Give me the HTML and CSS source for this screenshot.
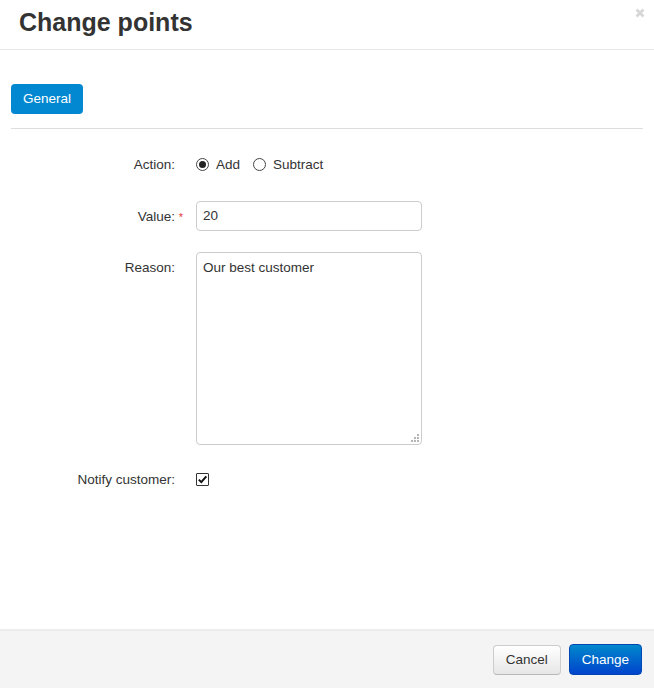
FILE: index.html
```html
<!DOCTYPE html>
<html>
<head>
<meta charset="utf-8">
<link rel="stylesheet" href="styles.css">
</head>
<body>
<div class="dialog">
  <div class="header">
    <h1 class="title">Change points</h1>
    <span class="close"><svg width="10" height="10" viewBox="0 0 10 10"><path d="M1.5 1.5L8.5 8.5M8.5 1.5L1.5 8.5" stroke="#d6d6d6" stroke-width="2.6" stroke-linecap="butt"/></svg></span>
  </div>
  <div class="body">
    <div class="tabs">
      <span class="tab">General</span>
    </div>
    <div class="form">
      <div class="row row-action">
        <div class="label">Action:</div>
        <div class="control radios">
          <span class="radio checked"></span><span class="opt">Add</span>
          <span class="radio"></span><span class="opt">Subtract</span>
        </div>
      </div>
      <div class="row row-value">
        <div class="label">Value:<span class="req">*</span></div>
        <div class="control"><div class="input">20</div></div>
      </div>
      <div class="row row-reason">
        <div class="label label-top">Reason:</div>
        <div class="control">
          <div class="textarea">Our best customer
            <svg class="grip" width="8" height="8" viewBox="0 0 8 8"><g fill="#b5b5b5"><rect x="6" y="0" width="2" height="2"/><rect x="3" y="3" width="2" height="2"/><rect x="6" y="3" width="2" height="2"/><rect x="0" y="6" width="2" height="2"/><rect x="3" y="6" width="2" height="2"/><rect x="6" y="6" width="2" height="2"/></g></svg>
          </div>
        </div>
      </div>
      <div class="row row-notify">
        <div class="label">Notify customer:</div>
        <div class="control"><span class="checkbox"><svg width="11" height="11" viewBox="0 0 11 11"><path d="M1.8 5.6L4.3 8.1L9.3 2.3" fill="none" stroke="#111" stroke-width="2"/></svg></span></div>
      </div>
    </div>
  </div>
  <div class="footer">
    <span class="btn btn-default">Cancel</span>
    <span class="btn btn-primary">Change</span>
  </div>
</div>
</body>
</html>
```
FILE: styles.css
```css
html, body {
  margin: 0;
  padding: 0;
  background: #fff;
}
body {
  font-family: "Liberation Sans", Arial, sans-serif;
  font-size: 13.5px;
  color: #333;
}
.dialog {
  height: 688px;
  display: flex;
  flex-direction: column;
}
.header {
  height: 49px;
  border-bottom: 1px solid #e8e8e8;
  display: flex;
  justify-content: space-between;
  align-items: flex-start;
  padding: 0 9px 0 19px;
}
.title {
  margin: 6px 0 0;
  font-size: 25px;
  line-height: 32px;
  font-weight: bold;
  color: #333;
}
.close {
  margin-top: 8px;
  display: block;
  line-height: 0;
}
.body {
  flex: 1;
  padding: 0 11px;
}
.tabs {
  margin-top: 34px;
  padding-bottom: 14px;
  border-bottom: 1px solid #ddd;
  display: flex;
}
.tab {
  height: 30px;
  line-height: 30px;
  padding: 0 12px;
  background: #0288d1;
  color: #fff;
  border-radius: 4px;
  font-size: 13.5px;
}
.form {
  display: flex;
  flex-direction: column;
}
.row {
  display: flex;
  align-items: center;
}
.label {
  width: 164px;
  text-align: right;
  color: #333;
  flex: none;
  position: relative;
}
.control {
  margin-left: 21px;
  display: flex;
  align-items: center;
}
.row-action { margin-top: 25px; height: 20px; }
.row-value { margin-top: 27px; }
.row-reason { margin-top: 21px; align-items: flex-start; }
.row-notify { margin-top: 24px; height: 20px; }
.label-top { padding-top: 8px; line-height: 16px; }
.req {
  color: #e53935;
  font-size: 11px;
  position: absolute;
  right: -8px;
  top: 2px;
}
.radios .radio {
  width: 11px;
  height: 11px;
  border: 1px solid #444;
  border-radius: 50%;
  background: #fff;
  display: inline-flex;
  align-items: center;
  justify-content: center;
}
.radios .radio.checked::after {
  content: "";
  width: 7px;
  height: 7px;
  border-radius: 50%;
  background: #222;
}
.opt {
  margin-left: 7px;
  margin-right: 13px;
  color: #333;
}
.input {
  width: 212px;
  height: 28px;
  line-height: 28px;
  border: 1px solid #ccc;
  border-radius: 4px;
  padding: 0 6px;
  color: #333;
}
.textarea {
  width: 212px;
  height: 182px;
  border: 1px solid #ccc;
  border-radius: 4px;
  padding: 7px 6px 2px;
  line-height: 16px;
  color: #333;
  position: relative;
}
.grip {
  position: absolute;
  right: 2px;
  bottom: 2px;
}
.checkbox {
  width: 11px;
  height: 11px;
  border: 1px solid #333;
  background: #fff;
  display: flex;
  align-items: center;
  justify-content: center;
  border-radius: 1px;
}
.footer {
  height: 57px;
  border-top: 2px solid #ececec;
  background: #f4f4f4;
  display: flex;
  justify-content: flex-end;
  align-items: flex-start;
  padding: 0 12px 0 0;
}
.btn {
  height: 28px;
  line-height: 28px;
  border-radius: 4px;
  font-size: 13.5px;
  padding: 0 12px;
  margin-top: 14px;
}
.btn-default {
  color: #333;
  border: 1px solid #ccc;
  border-bottom-color: #b8b8b8;
  background: linear-gradient(#ffffff, #e6e6e6);
}
.btn-primary {
  margin-left: 8px;
  margin-top: 13px;
  height: 29px;
  line-height: 29px;
  color: #fff;
  border: 1px solid #0047b3;
  background: linear-gradient(#0088cc, #0044cc);
}
```
